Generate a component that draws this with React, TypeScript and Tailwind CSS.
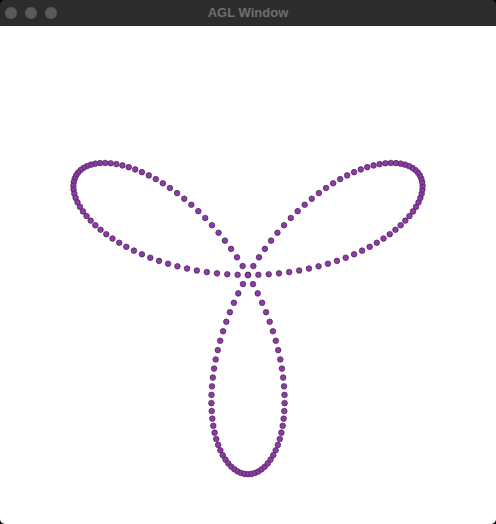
const W = 496;
const H = 498;

function rosePoints() {
  const pts: Array<{ x: number; y: number }> = [];
  const cx = W / 2;
  const cy = H / 2;
  const sx = 0.8 * (W / 2);
  const sy = 0.8 * (H / 2);
  for (let i = 0; i < 180; i++) {
    const t = (i * Math.PI) / 180;
    const r = Math.sin(3 * t);
    pts.push({ x: cx + sx * r * Math.cos(t), y: cy - sy * r * Math.sin(t) });
  }
  return pts;
}

export default function App() {
  const points = rosePoints();

  return (
    <div className="h-[524px] w-[496px] overflow-hidden bg-black">
      <div className="flex h-full w-full flex-col overflow-hidden rounded-[5px]">
        <div className="relative flex h-[26px] shrink-0 items-center justify-center bg-[#2c2c2c]">
          <div className="absolute left-[5px] top-[6.5px] flex gap-[8px]">
            <span className="h-[12px] w-[12px] rounded-full bg-[#5a5a5a]" />
            <span className="h-[12px] w-[12px] rounded-full bg-[#5a5a5a]" />
            <span className="h-[12px] w-[12px] rounded-full bg-[#5a5a5a]" />
          </div>
          <span className="font-['Liberation_Sans',Arial,sans-serif] text-[13px] font-bold text-[#6f6f6f]">
            AGL Window
          </span>
        </div>
        <div className="flex-1 bg-white">
          <svg width={W} height={H} viewBox={`0 0 ${W} ${H}`} className="block">
            {points.map((p, i) => (
              <circle
                key={i}
                cx={p.x}
                cy={p.y}
                r={2.8}
                fill="#8c3ca2"
                stroke="#47205a"
                strokeWidth={0.7}
              />
            ))}
          </svg>
        </div>
      </div>
    </div>
  );
}
